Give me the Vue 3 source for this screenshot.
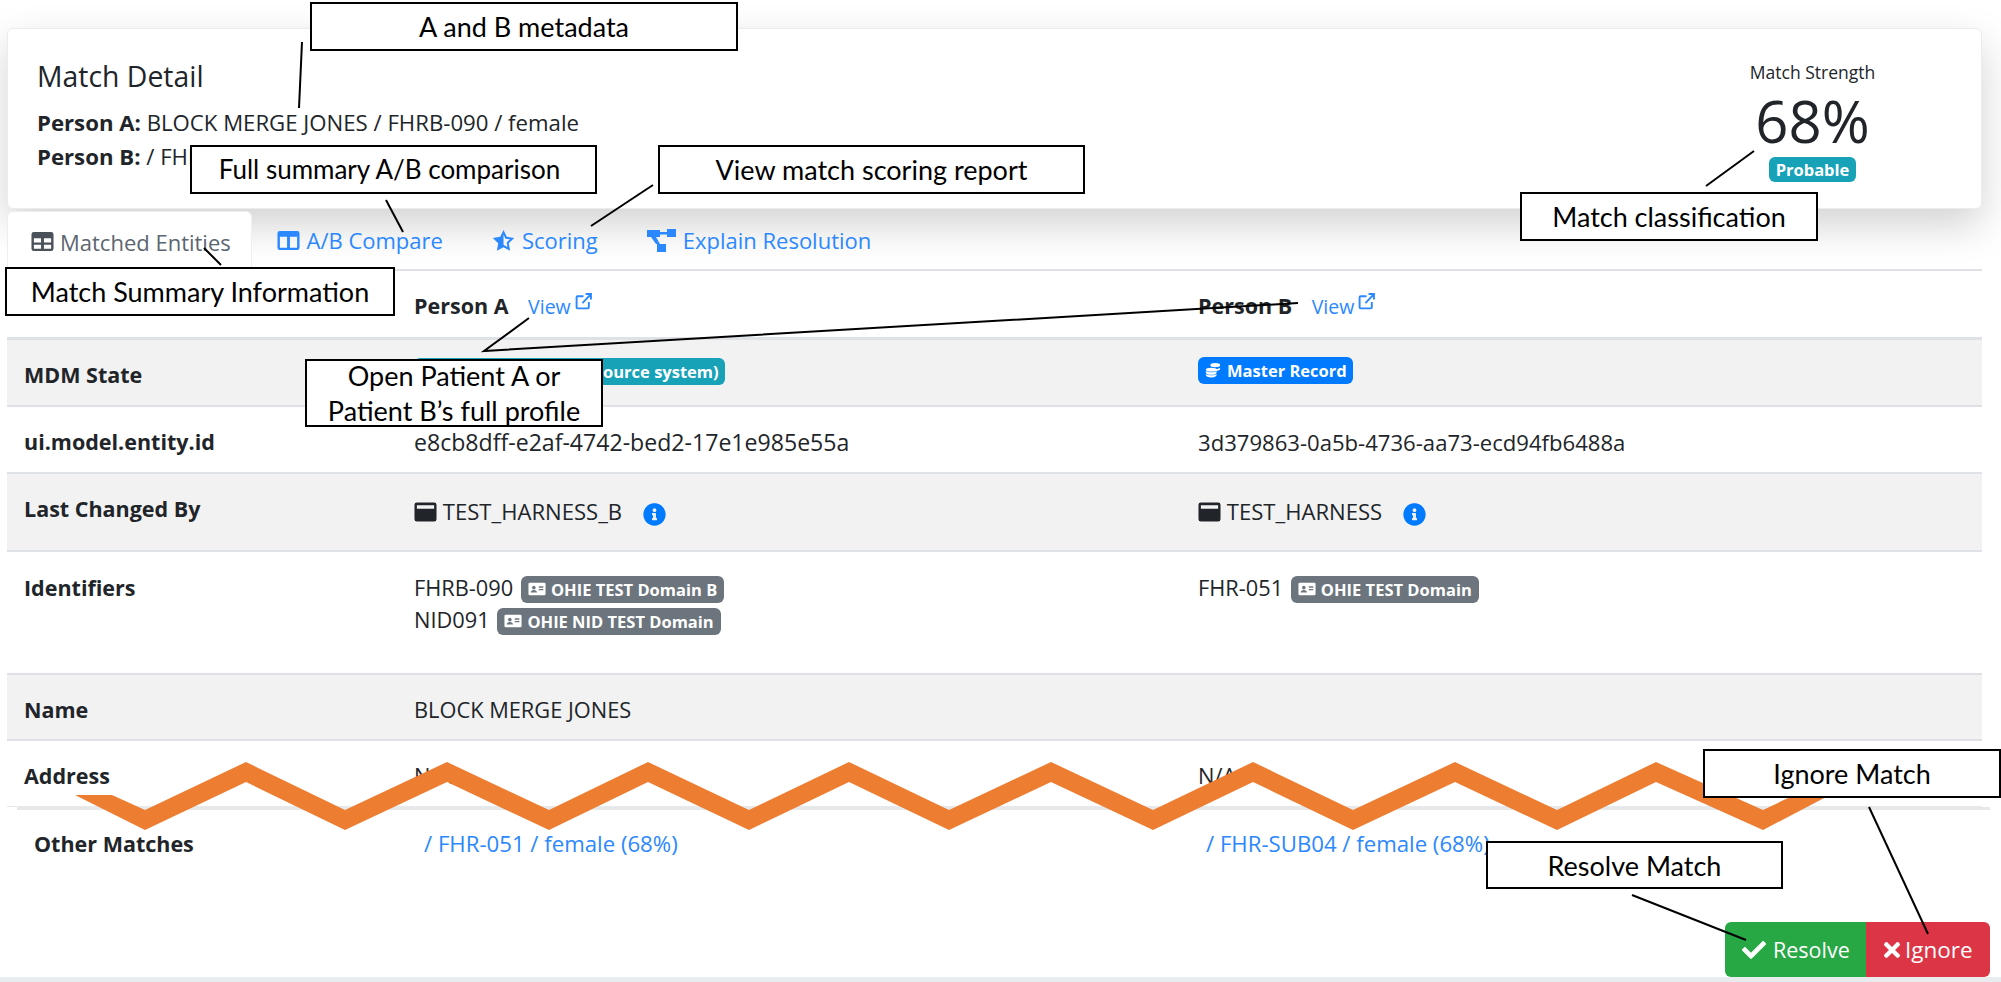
<script setup>
const peaks = [[145,0],[246,1],[345,0],[447,1],[549,0],[648,1],[749,0],[849,1],[949,0],[1051,1],[1153,0],[1253,1],[1353,0],[1455,1],[1557,0],[1656,1],[1763,0]]
const y = (k, t) => (k ? (t ? 762 : 782) : (t ? 810 : 830))
const upper = peaks.map(([x, k]) => `${x},${y(k, true)}`)
const lower = peaks.map(([x, k]) => `${x},${y(k, false)}`).reverse()
const zigzag = ['75,795', '112,795', ...upper, '1826,780', '1826,797', ...lower].join(' ')
const notes = [
  { text: 'A and B metadata', cls: 'n1' },
  { text: 'Full summary A/B comparison', cls: 'n2' },
  { text: 'View match scoring report', cls: 'n3' },
  { text: 'Match classification', cls: 'n4' },
  { text: 'Match Summary Information', cls: 'n5' },
  { text: 'Open Patient A or Patient B’s full profile', cls: 'n6' },
  { text: 'Ignore Match', cls: 'n7' },
  { text: 'Resolve Match', cls: 'n8' }
]
const lines = [
  '302,42 299,108', '386,200 403,232', '653,185 591,226', '204,248 221,265',
  '529,318 484,351 1298,303', '1754,151 1706,186', '1632,895 1746,940', '1869,807 1928,934'
]
</script>

<template>
  <div class="page">
    <section class="card">
      <div class="card-main">
        <h1 class="title">Match Detail</h1>
        <p class="meta"><b>Person A:</b> BLOCK MERGE JONES / FHRB-090 / female</p>
        <p class="meta"><b>Person B:</b> / FHR-051 / female</p>
      </div>
      <div class="strength">
        <div class="strength-label">Match Strength</div>
        <div class="strength-value">68%</div>
        <span class="badge teal small">Probable</span>
      </div>
    </section>

    <nav class="tabs">
      <a class="tab active">
        <svg class="ico" viewBox="0 1 24 20"><path fill="currentColor" fill-rule="evenodd" d="M3 1h18a2.500 2.500 0 0 1 2.500 2.500v15A2.500 2.500 0 0 1 21 21H3a2.500 2.500 0 0 1-2.500-2.500v-15A2.500 2.500 0 0 1 3 1zm0 6.500v4.500h7.500V7.500zm10.500 0v4.500H21V7.500zM3 14.500V18.500h7.500v-4zm10.500 0V18.500H21v-4z"/></svg>
        Matched Entities
      </a>
      <a class="tab">
        <svg class="ico" viewBox="0 1 24 20"><path fill="currentColor" fill-rule="evenodd" d="M3 1h18a2.500 2.500 0 0 1 2.500 2.500v15A2.500 2.500 0 0 1 21 21H3a2.500 2.500 0 0 1-2.500-2.500v-15A2.500 2.500 0 0 1 3 1zm0 6v11.500h7.500V7zm10.500 0v11.500H21V7z"/></svg>
        A/B Compare
      </a>
      <a class="tab">
        <svg class="ico star" viewBox="0 0 24 23"><path fill="currentColor" fill-rule="evenodd" d="M12 .5l3.400 7.200 7.800 1.100-5.700 5.500 1.400 7.900L12 18.500l-6.900 3.700 1.400-7.900L.8 8.800l7.800-1.100zM12 5.200v10.800l4.100 2.200-.8-4.600 3.400-3.300-4.700-.7z"/></svg>
        Scoring
      </a>
      <a class="tab">
        <svg class="ico wide" viewBox="0 0 29 23"><path fill="currentColor" d="M0 1h13v7H0zM20 0h9v8h-9zM10 15h9v8h-9zM13 3h7v2.500h-7zM4 8h5l4 7H9z"/></svg>
        Explain Resolution
      </a>
    </nav>

    <div class="table">
      <div class="row r-head">
        <div class="strong">&nbsp;</div>
        <div class="strong">Person A <a class="view">View<svg class="ext" viewBox="0 0 16 16"><path fill="none" stroke="currentColor" stroke-width="1.800" d="M8 3H2.500A1 1 0 0 0 1.500 4v9.500a1 1 0 0 0 1 1H12a1 1 0 0 0 1-1V8.500M7 9.500 14.500 1.500M10 1h5v5"/></svg></a></div>
        <div class="strong">Person B <a class="view">View<svg class="ext" viewBox="0 0 16 16"><path fill="none" stroke="currentColor" stroke-width="1.800" d="M8 3H2.500A1 1 0 0 0 1.500 4v9.500a1 1 0 0 0 1 1H12a1 1 0 0 0 1-1V8.500M7 9.500 14.500 1.500M10 1h5v5"/></svg></a></div>
      </div>
      <div class="row r-std tall alt">
        <div class="strong">MDM State</div>
        <div><span class="badge teal raised pad-left">Entity Record (from source system)</span></div>
        <div>
          <span class="badge blue raised">
            <svg class="bico" viewBox="0 0 18 18"><g fill="currentColor"><ellipse cx="11.500" cy="3.500" rx="5.500" ry="2.500"/><path d="M6 6.500c1 1 3 1.500 5.500 1.500S16 7.500 17 6.500V8c0 1-2 2-5 2.200C10 9 8 8.500 6 8.500zM1 10c1 1 3.500 1.500 6 1.500S12 11 13 10v2c0 1.300-2.700 2.300-6 2.300S1 13.300 1 12z"/><ellipse cx="7" cy="8.800" rx="6" ry="2.200"/><path d="M1 13.500c1 1 3.500 1.500 6 1.500s5-.5 6-1.500v1.500c0 1.300-2.700 2.300-6 2.300S1 16.300 1 15z"/></g></svg>
            Master Record
          </span>
        </div>
      </div>
      <div class="row r-std tall">
        <div class="strong">ui.model.entity.id</div>
        <div class="uuid-a">e8cb8dff-e2af-4742-bed2-17e1e985e55a</div>
        <div class="uuid-b">3d379863-0a5b-4736-aa73-ecd94fb6488a</div>
      </div>
      <div class="row r-changed alt">
        <div class="strong">Last Changed By</div>
        <div class="lowered">
          <svg class="win" viewBox="0 1 24 20"><path fill="currentColor" fill-rule="evenodd" d="M3 1h18a2.500 2.500 0 0 1 2.500 2.500v15A2.500 2.500 0 0 1 21 21H3a2.500 2.500 0 0 1-2.500-2.500v-15A2.500 2.500 0 0 1 3 1zm0 3v3.500h18V4z"/></svg>
          TEST_HARNESS_B
          <svg class="info" viewBox="0 0 512 512"><path fill="currentColor" d="M256 8C119.043 8 8 119.083 8 256c0 136.997 111.043 248 248 248s248-111.003 248-248C504 119.083 392.957 8 256 8zm0 110c23.196 0 42 18.804 42 42s-18.804 42-42 42-42-18.804-42-42 18.804-42 42-42zm56 254c0 6.627-5.373 12-12 12h-88c-6.627 0-12-5.373-12-12v-24c0-6.627 5.373-12 12-12h12v-64h-12c-6.627 0-12-5.373-12-12v-24c0-6.627 5.373-12 12-12h64c6.627 0 12 5.373 12 12v100h12c6.627 0 12 5.373 12 12v24z"/></svg>
        </div>
        <div class="lowered">
          <svg class="win" viewBox="0 1 24 20"><path fill="currentColor" fill-rule="evenodd" d="M3 1h18a2.500 2.500 0 0 1 2.500 2.500v15A2.500 2.500 0 0 1 21 21H3a2.500 2.500 0 0 1-2.500-2.500v-15A2.500 2.500 0 0 1 3 1zm0 3v3.500h18V4z"/></svg>
          TEST_HARNESS
          <svg class="info" viewBox="0 0 512 512"><path fill="currentColor" d="M256 8C119.043 8 8 119.083 8 256c0 136.997 111.043 248 248 248s248-111.003 248-248C504 119.083 392.957 8 256 8zm0 110c23.196 0 42 18.804 42 42s-18.804 42-42 42-42-18.804-42-42 18.804-42 42-42zm56 254c0 6.627-5.373 12-12 12h-88c-6.627 0-12-5.373-12-12v-24c0-6.627 5.373-12 12-12h12v-64h-12c-6.627 0-12-5.373-12-12v-24c0-6.627 5.373-12 12-12h64c6.627 0 12 5.373 12 12v100h12c6.627 0 12 5.373 12 12v24z"/></svg>
        </div>
      </div>
      <div class="row r-ident">
        <div class="strong">Identifiers</div>
        <div>
          <div class="id-line">FHRB-090 <span class="badge gray"><svg class="bico" viewBox="0 0 20 16"><path fill="currentColor" fill-rule="evenodd" d="M2 1h16a1.500 1.500 0 0 1 1.500 1.500v11A1.500 1.500 0 0 1 18 15H2a1.500 1.500 0 0 1-1.500-1.500v-11A1.500 1.500 0 0 1 2 1zm4.500 3.500a2 2 0 1 0 0 4 2 2 0 0 0 0-4zM3 12h7c0-2-1.500-3-3.500-3S3 10 3 12zm9-7v1.500h5V5zm0 3v1.500h5V8z"/></svg>OHIE TEST Domain B</span></div>
          <div class="id-line">NID091 <span class="badge gray"><svg class="bico" viewBox="0 0 20 16"><path fill="currentColor" fill-rule="evenodd" d="M2 1h16a1.500 1.500 0 0 1 1.500 1.500v11A1.500 1.500 0 0 1 18 15H2a1.500 1.500 0 0 1-1.500-1.500v-11A1.500 1.500 0 0 1 2 1zm4.500 3.500a2 2 0 1 0 0 4 2 2 0 0 0 0-4zM3 12h7c0-2-1.500-3-3.500-3S3 10 3 12zm9-7v1.500h5V5zm0 3v1.500h5V8z"/></svg>OHIE NID TEST Domain</span></div>
        </div>
        <div>
          <div class="id-line">FHR-051 <span class="badge gray"><svg class="bico" viewBox="0 0 20 16"><path fill="currentColor" fill-rule="evenodd" d="M2 1h16a1.500 1.500 0 0 1 1.500 1.500v11A1.500 1.500 0 0 1 18 15H2a1.500 1.500 0 0 1-1.500-1.500v-11A1.500 1.500 0 0 1 2 1zm4.500 3.500a2 2 0 1 0 0 4 2 2 0 0 0 0-4zM3 12h7c0-2-1.500-3-3.500-3S3 10 3 12zm9-7v1.500h5V5zm0 3v1.500h5V8z"/></svg>OHIE TEST Domain</span></div>
        </div>
      </div>
      <div class="row r-std alt">
        <div class="strong">Name</div>
        <div>BLOCK MERGE JONES</div>
        <div></div>
      </div>
      <div class="row r-std last">
        <div class="strong">Address</div>
        <div>N/A</div>
        <div>N/A</div>
      </div>
    </div>

    <div class="others">
      <div class="strong">Other Matches</div>
      <a class="other-link">/ FHR-051 / female (68%)</a>
      <a class="other-link">/ FHR-SUB04 / female (68%)</a>
    </div>

    <div class="actions">
      <button class="btn green">
        <svg class="bt-ico" viewBox="0 0 512 512"><path fill="currentColor" d="M173.898 439.404l-166.400-166.400c-9.997-9.997-9.997-26.206 0-36.204l36.203-36.204c9.997-9.998 26.207-9.998 36.204 0L192 312.690 432.095 72.596c9.997-9.997 26.207-9.997 36.204 0l36.203 36.204c9.997 9.997 9.997 26.206 0 36.204l-294.400 294.401c-9.998 9.997-26.207 9.997-36.204-.001z"/></svg>
        Resolve
      </button>
      <button class="btn red">
        <svg class="bt-ico x" viewBox="0 0 352 512"><path fill="currentColor" d="M242.720 256l100.070-100.070c12.280-12.280 12.280-32.190 0-44.480l-22.240-22.240c-12.280-12.280-32.190-12.280-44.480 0L176 189.280 75.930 89.210c-12.280-12.280-32.190-12.280-44.480 0L9.210 111.450c-12.280 12.280-12.280 32.190 0 44.480L109.280 256 9.210 356.070c-12.280 12.280-12.280 32.190 0 44.480l22.240 22.240c12.280 12.280 32.200 12.280 44.480 0L176 322.720l100.070 100.070c12.280 12.280 32.200 12.280 44.480 0l22.240-22.240c12.280-12.280 12.280-32.190 0-44.480L242.720 256z"/></svg>
        Ignore
      </button>
    </div>

    <div class="footer-bar"></div>

    <svg class="overlay" viewBox="0 0 2001 982" width="2001" height="982">
      <polygon :points="zigzag" fill="#ed7d31" />
      <polyline v-for="l in lines" :key="l" :points="l" fill="none" stroke="#000" stroke-width="2" />
    </svg>
    <div v-for="n in notes" :key="n.cls" class="note" :class="n.cls">{{ n.text }}</div>
  </div>
</template>

<style>
html, body { margin: 0; background: #fff; }
</style>

<style scoped>
.page {
  position: relative;
  width: 2001px;
  height: 982px;
  overflow: hidden;
  box-sizing: border-box;
  padding: 28px 0 0 7px;
  background: #fff;
  color: #212529;
  font-family: "Open Sans", "Noto Sans", sans-serif;
  font-size: 21.800px;
  line-height: 30px;
}
.card {
  width: 1975px;
  height: 181px;
  box-sizing: border-box;
  display: flex;
  justify-content: space-between;
  background: #fff;
  border: 1px solid #ececec;
  border-radius: 6px;
  box-shadow: 0 16px 40px rgba(0, 0, 0, .18);
  padding: 0 0 0 29px;
  position: relative;
}
.title { margin: 29px 0 14px; font-size: 28.400px; font-weight: 400; line-height: 36px; }
.meta { margin: 0 0 4px; font-size: 22.200px; }
.strength { width: 337px; text-align: center; padding-top: 28px; box-sizing: border-box; }
.strength-label { font-size: 17.500px; line-height: 30px; }
.strength-value { font-size: 58px; line-height: 62px; margin-top: 3px; }
.tabs {
  position: relative;
  display: flex;
  align-items: stretch;
  width: 1975px;
  height: 60px;
  margin-top: 2px;
  box-sizing: border-box;
  border-bottom: 2px solid #dee2e6;
  font-size: 22px;
}
.tab {
  display: flex;
  align-items: center;
  gap: 7px;
  padding: 0 24.500px;
  color: #2b88ff;
  white-space: nowrap;
}
.tab.active {
  color: #5c6670;
  background: #fff;
  border: 1px solid #eceef0;
  border-bottom: 0;
  border-radius: 6px 6px 0 0;
  padding: 0 0 0 23px;
  gap: 6px;
  width: 245px;
  height: 60px;
  box-sizing: border-box;
}
.tab.active .ico { color: #4a5158; }
.ico { width: 23px; height: 21px; flex: none; }
.ico.star { height: 23px; }
.ico.wide { width: 29px; height: 23px; }
.table { width: 1975px; position: relative; }
.row {
  display: grid;
  grid-template-columns: 390px 784px 784px;
  box-sizing: border-box;
  padding-left: 17px;
  border-bottom: 2px solid #dee2e6;
}
.row.alt { background: #f2f2f2; }
.row.last { border-bottom: 1px solid #e6e8ea; }
.r-head { height: 69px; padding-top: 20px; border-bottom-width: 3px; }
.r-std { height: 66px; padding-top: 20px; }
.r-std.tall { height: 67px; }
.r-changed { height: 78px; padding-top: 20px; }
.r-ident { height: 123px; padding-top: 21px; }
.strong { font-weight: 700; font-size: 21.500px; }
.uuid-a { font-size: 23.100px; }
.uuid-b { font-size: 22.100px; }
.lowered { padding-top: 2px; font-size: 22.100px; }
.view { color: #2b88ff; font-weight: 400; margin-left: 14px; font-size: 19.500px; }
.ext { width: 17px; height: 17px; margin-left: 4px; vertical-align: 4px; }
.badge {
  display: inline-flex;
  align-items: center;
  gap: 5px;
  height: 27px;
  padding: 0 7px;
  border-radius: 6px;
  color: #fff;
  font-size: 16.500px;
  font-weight: 700;
  line-height: 27px;
  vertical-align: -1px;
  white-space: nowrap;
}
.teal { background: #17a2b8; }
.blue { background: #007bff; }
.gray { background: #6c757d; margin-left: 2px; }
.small { height: 25px; padding: 0 7px; line-height: 25px; }
.raised { margin-top: -6px; vertical-align: 5px; padding: 0 6px; }
.pad-left { padding-left: 16px; }
.bico { width: 18px; height: 16px; flex: none; }
.win { width: 23px; height: 20px; vertical-align: -2px; }
.info { width: 23px; height: 23px; color: #007bff; margin-left: 15px; vertical-align: -6px; }
.id-line { height: 32px; }
.others {
  position: relative;
  display: grid;
  grid-template-columns: 390px 782px 784px;
  width: 1973px;
  height: 115px;
  box-sizing: border-box;
  margin-left: 10px;
  padding: 19px 0 0 17px;
  border-top: 3px solid #e6e8ea;
}
.other-link { color: #2b88ff; font-size: 22.200px; }
.actions { display: flex; justify-content: flex-end; width: 1983px; height: 55px; position: relative; }
.btn {
  display: flex;
  align-items: center;
  gap: 7px;
  height: 55px;
  border: 0;
  color: #fff;
  font: inherit;
  font-size: 21.500px;
  margin: 0;
  box-sizing: border-box;
  padding: 0 0 0 17px;
}
.green { background: #28a745; width: 141px; border-radius: 6px 0 0 6px; }
.red { background: #dc3545; width: 124px; border-radius: 0 6px 6px 0; padding-left: 18px; gap: 5px; font-size: 22.500px; }
.bt-ico { width: 24px; height: 24px; flex: none; }
.bt-ico.x { width: 16px; }
.footer-bar {
  position: absolute;
  left: 0;
  top: 977px;
  width: 2001px;
  height: 5px;
  background: #e9ecef;
}
.overlay { position: absolute; left: 0; top: 0; pointer-events: none; }
.note {
  position: absolute;
  box-sizing: border-box;
  display: flex;
  align-items: center;
  justify-content: center;
  text-align: center;
  background: #fff;
  border: 2px solid #000;
  color: #000;
  font-family: Lato, "Open Sans", sans-serif;
  font-size: 27px;
  line-height: 35px;
}
.n1 { left: 310px; top: 2px; width: 428px; height: 49px; }
.n2 { left: 190px; top: 145px; width: 407px; height: 49px; font-size: 26px; padding-right: 8px; }
.n3 { left: 658px; top: 145px; width: 427px; height: 49px; }
.n4 { left: 1520px; top: 192px; width: 298px; height: 49px; }
.n5 { left: 5px; top: 267px; width: 390px; height: 49px; }
.n6 { left: 305px; top: 359px; width: 298px; height: 68px; padding: 0 10px; }
.n7 { left: 1703px; top: 749px; width: 298px; height: 49px; }
.n8 { left: 1486px; top: 841px; width: 297px; height: 48px; }
</style>
